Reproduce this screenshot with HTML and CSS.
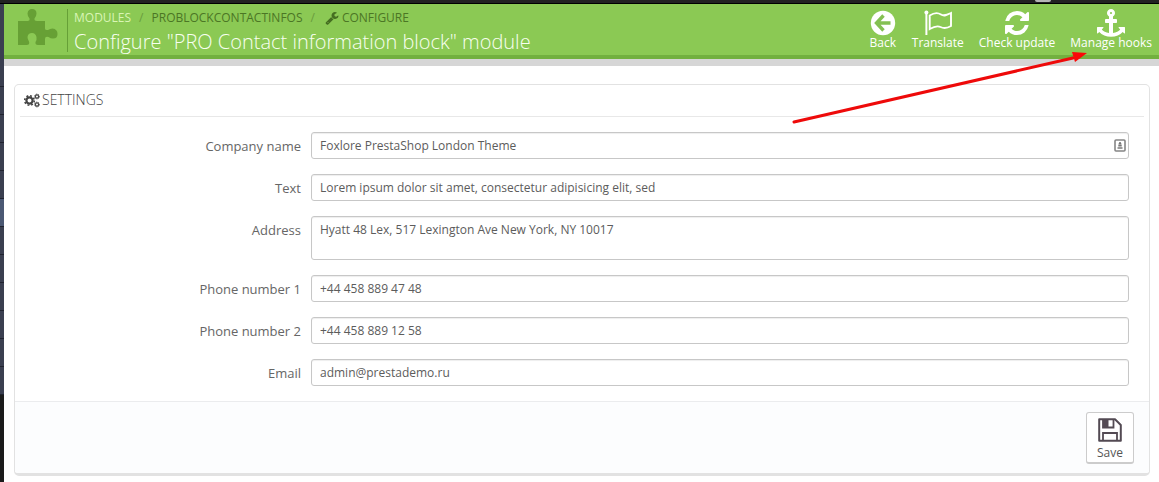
FILE: index.html
```
<!DOCTYPE html>
<html lang="en">
<head>
<meta charset="utf-8">
<title>Configure module</title>
<link rel="stylesheet" href="styles.css">
</head>
<body>
<div class="topbar"><span class="avatar"></span></div>
<div class="shell">
  <nav class="sidebar" aria-label="Main menu">
    <span class="nav-item nav-first"></span>
    <span class="nav-item"></span>
    <span class="nav-item"></span>
    <span class="nav-item"></span>
    <span class="nav-item"></span>
    <span class="nav-item nav-active"></span>
    <span class="nav-item"></span>
    <span class="nav-item"></span>
    <span class="nav-item"></span>
    <span class="nav-item"></span>
    <span class="nav-item"></span>
    <span class="nav-item"></span>
  </nav>
  <div class="content">
    <header class="page-head">
      <svg class="puzzle" viewBox="0 0 40 37" aria-hidden="true"><path d="M0 12H9.500Q12 12 11.500 9.500Q9.500 7.500 9.500 4.500Q10 0 14 0Q18.500 0 18.500 4.500Q18.500 7 16.500 9.500Q16 12 19 12H27V19.500Q27 21.500 30 21Q32 19.500 34.500 19.500Q39.500 20 39.500 25Q39.500 29.500 35 29.500Q32.500 29.500 30.500 28Q27 27 27 30V36H20Q17 36 17.500 33Q19 31 18.500 28Q17.500 24 14 24Q10 24 9.500 28Q9.500 30.500 11 32.500Q12 36 8.500 36H0Z"/></svg>
      <div class="head-text">
        <ol class="crumbs">
          <li><a class="crumb-root" href="#">MODULES</a></li>
          <li><a href="#">PROBLOCKCONTACTINFOS</a></li>
          <li><a href="#"><svg class="wrench" viewBox="0 0 1792 1792" aria-hidden="true"><path d="M448 1472q0-26-19-45t-45-19-45 19-19 45 19 45 45 19 45-19 19-45zm644-420l-682 682q-37 37-90 37-52 0-91-37l-106-108q-38-36-38-90 0-53 38-91l681-681q39 98 114.500 173.500t173.500 114.500zm634-435q0 39-23 106-47 134-164.500 217.500t-258.500 83.500q-185 0-316.500-131.500t-131.500-316.500 131.500-316.500 316.500-131.500q58 0 121.500 16.500t107.500 46.500q16 11 16 28t-16 28l-293 169v224l193 107q5-3 79-48.500t135.500-81 70.500-35.500q15 0 23.500 10t8.500 25z"/></svg>CONFIGURE</a></li>
        </ol>
        <h1 class="title">Configure "PRO Contact information block" module</h1>
      </div>
      <div class="tools">
        <a class="tool" href="#">
          <svg class="tool-icon" viewBox="0 0 28 28" aria-hidden="true"><circle cx="14" cy="14" r="12.200" fill="currentColor"/><path d="M14.500 6.500L7.500 14l7 7.500M8 14h13.500" fill="none" stroke="#84c052" stroke-width="3.400"/></svg>
          <span>Back</span>
        </a>
        <a class="tool" href="#">
          <svg class="tool-icon" viewBox="0 0 28 28" aria-hidden="true"><path d="M2.400 3v23" fill="none" stroke="currentColor" stroke-width="2"/><circle cx="2.400" cy="3.400" r="2" fill="currentColor"/><path d="M5.700 6.500C11 3 14 3.500 17 5.500S23 6 27 4V17C22 20 19.500 19.500 16.500 18S10 17.500 5.700 20Z" fill="none" stroke="currentColor" stroke-width="1.900"/></svg>
          <span>Translate</span>
        </a>
        <a class="tool" href="#">
          <svg class="tool-icon" viewBox="0 0 1792 1792" aria-hidden="true"><path fill="currentColor" d="M1639 1056q0 5-1 7-64 268-268 434.500t-478 166.500q-146 0-282.500-55t-243.500-157l-129 129q-19 19-45 19t-45-19-19-45v-448q0-26 19-45t45-19h448q26 0 45 19t19 45-19 45l-137 137q71 66 161 102t187 36q134 0 250-65t186-179q11-17 53-117 8-23 30-23h192q13 0 22.500 9.500t9.500 22.500zm25-800v448q0 26-19 45t-45 19h-448q-26 0-45-19t-19-45 19-45l138-138q-148-137-349-137-134 0-250 65t-186 179q-11 17-53 117-8 23-30 23h-199q-13 0-22.500-9.500t-9.500-22.500v-7q65-268 270-434.500t480-166.500q146 0 284 55.500t245 156.500l130-129q19-19 45-19t45 19 19 45z"/></svg>
          <span>Check update</span>
        </a>
        <a class="tool" href="#">
          <svg class="tool-icon" viewBox="0 0 1792 1792" aria-hidden="true"><path fill="currentColor" d="M960 256q0-26-19-45t-45-19-45 19-19 45 19 45 45 19 45-19 19-45zm832 928v352q0 22-20 30-8 2-12 2-13 0-23-9l-93-93q-119 143-318.500 226.500t-429.500 83.500-429.500-83.500-318.500-226.500l-93 93q-9 9-23 9-4 0-12-2-20-8-20-30v-352q0-14 9-23t23-9h352q22 0 30 20 8 19-7 35l-100 100q67 91 189.500 153.500t271.500 82.500v-647h-192q-26 0-45-19t-19-45v-128q0-26 19-45t45-19h192v-163q-58-34-93-92.500t-35-128.500q0-106 75-181t181-75 181 75 75 181q0 70-35 128.500t-93 92.500v163h192q26 0 45 19t19 45v128q0 26-19 45t-45 19h-192v647q149-20 271.500-82.500t189.500-153.500l-100-100q-15-16-7-35 8-20 30-20h352q14 0 23 9t9 23z"/></svg>
          <span>Manage hooks</span>
        </a>
      </div>
      <svg class="pointer" viewBox="0 0 300 76" aria-hidden="true"><path d="M3 72L282 8" fill="none" stroke="#ee0a0a" stroke-width="3" stroke-linecap="round"/><path d="M296 3L281 2L284 12Z" fill="#fa0808"/></svg>
    </header>
    <main class="main">
      <form class="panel">
        <h2 class="panel-head">
          <svg class="cogs" viewBox="0 0 16 15" aria-hidden="true"><g fill="none" stroke="currentColor"><circle cx="5.500" cy="7.500" r="3.100" stroke-width="2.200"/><circle cx="5.500" cy="7.500" r="4.800" stroke-width="1.600" stroke-dasharray="1.900 1.870"/><circle cx="13" cy="3.500" r="1.600" stroke-width="1.200"/><circle cx="13" cy="3.500" r="2.400" stroke-width="1" stroke-dasharray="1 .885"/><circle cx="13" cy="11.500" r="1.600" stroke-width="1.200"/><circle cx="13" cy="11.500" r="2.400" stroke-width="1" stroke-dasharray="1 .885"/></g></svg>SETTINGS
        </h2>
        <div class="fields">
          <label class="label" for="company">Company name</label>
          <div class="control">
            <input class="input" id="company" type="text" value="Foxlore PrestaShop London Theme">
            <svg class="autofill" viewBox="0 0 12 13" aria-hidden="true"><rect x="1" y="1" width="10" height="11" rx="1" fill="#fff" stroke="#858585" stroke-width="1.600"/><circle cx="6" cy="4.300" r="1.200" fill="#777"/><path d="M4.300 5.500h3.400v2H4.300z" fill="#777"/><path d="M3.500 9h5" stroke="#777" stroke-width="1.400"/></svg>
          </div>
          <label class="label" for="text">Text</label>
          <input class="input" id="text" type="text" value="Lorem ipsum dolor sit amet, consectetur adipisicing elit, sed">
          <label class="label" for="address">Address</label>
          <textarea class="input area" id="address">Hyatt 48 Lex, 517 Lexington Ave New York, NY 10017</textarea>
          <label class="label" for="phone1">Phone number 1</label>
          <input class="input" id="phone1" type="text" value="+44 458 889 47 48">
          <label class="label" for="phone2">Phone number 2</label>
          <input class="input" id="phone2" type="text" value="+44 458 889 12 58">
          <label class="label" for="email">Email</label>
          <input class="input" id="email" type="text" value="admin@prestademo.ru">
        </div>
        <div class="panel-foot">
          <button class="save" type="button">
            <svg class="disk" viewBox="0 0 24 24" aria-hidden="true"><path d="M1.200 1.200H17L22.800 7V22.800H1.200Z" fill="none" stroke="currentColor" stroke-width="2" stroke-linejoin="round"/><path d="M5 1.500V9.500H15.500V1.500M5 22.500V15H19V22.500" fill="none" stroke="currentColor" stroke-width="1.800"/><path d="M5 1.500h5.500v8H5z" fill="currentColor"/></svg>
            <span>Save</span>
          </button>
        </div>
      </form>
    </main>
  </div>
</div>
</body>
</html>
```
FILE: styles.css
```
* { box-sizing: border-box; }
body {
  margin: 0;
  min-height: 100vh;
  display: flex;
  flex-direction: column;
  background: #fff;
  color: #666;
  font: 12px/16px "Open Sans", "Noto Sans", sans-serif;
}
a { color: inherit; text-decoration: none; }
.topbar {
  height: 4px;
  background: #222;
  border-bottom: 1px solid #000;
  display: flex;
  justify-content: flex-end;
  padding-right: 108px;
  overflow: hidden;
}
.avatar { width: 16px; height: 2px; background: #b5b5b5; border-radius: 0 0 8px 8px; }
.shell { flex: 1; display: flex; }
.sidebar { width: 4px; background: #1b1b1b; flex: none; }
.nav-item { display: block; height: 28px; background: #3a3f50; border-bottom: 1px solid #20232f; }
.nav-first { height: 83px; }
.nav-active { background: #4b5873; }
.content { flex: 1; min-width: 0; }
.page-head {
  position: relative;
  display: flex;
  height: 62px;
  padding: 5px 7px 0 14px;
  background: #8bc954;
  border-bottom: 7px solid #d6d6d6;
  box-shadow: inset 0 -4px #72b03f;
}
.puzzle { width: 40px; height: 37px; fill: #67a035; flex: none; }
.head-text { height: 43px; margin-left: 9px; padding-left: 6px; border-left: 1px solid #66a037; }
.crumbs { display: flex; margin: 0; padding: 1px 0 0; list-style: none; color: #4b7625; }
.crumbs li + li::before { content: "/"; padding: 0 8px; color: #6a9c3d; }
.crumb-root { color: #d9f5b5; }
.wrench { width: 14px; height: 14px; margin: 0 3px 0 2px; vertical-align: -3px; fill: #456e21; }
.title { margin: 3px 0 0; color: #f8fff0; font-size: 20px; line-height: 26px; font-weight: 300; white-space: nowrap; }
.tools { display: flex; gap: 15px; margin-left: auto; color: #fff; }
.tool { display: flex; flex-direction: column; align-items: center; white-space: nowrap; }
.tool-icon { width: 28px; height: 28px; margin-bottom: -2px; }
.pointer { position: absolute; width: 300px; height: 76px; right: 68px; top: 46px; pointer-events: none; }
.main { padding: 18px 9px 6px 10px; }
.panel {
  border: 1px solid #e2e2e2;
  border-bottom: 3px solid #e2e2e2;
  border-radius: 5px;
  overflow: hidden;
}
.panel-head {
  display: flex;
  align-items: center;
  gap: 2px;
  height: 32px;
  margin: 0 5px;
  padding: 0 0 1px 4px;
  border-bottom: 1px solid #e8e8e8;
  color: #444;
  font-size: 14px;
  font-weight: 300;
}
.cogs { width: 16px; height: 15px; color: #444; }
.fields {
  display: grid;
  grid-template-columns: minmax(0, 286fr) minmax(0, 818fr);
  gap: 15px 10px;
  padding: 15px 20px 15px 0;
}
.label { text-align: right; font-size: 13px; line-height: 28px; height: 27px; }
.control { position: relative; }
.input {
  display: block;
  width: 100%;
  height: 27px;
  padding: 0 8px;
  border: 1px solid #c7c7c7;
  border-radius: 3px;
  background: #fff;
  box-shadow: inset 0 1px 1px #eee;
  color: #5c5c5c;
  font: inherit;
}
.area { height: 44px; padding-top: 5px; resize: none; }
.autofill { position: absolute; right: 3px; top: 7px; width: 12px; height: 13px; }
.panel-foot {
  display: flex;
  justify-content: flex-end;
  padding: 10px 15px 9px;
  border-top: 1px solid #ebecee;
  background: #fcfdfe;
}
.save {
  display: flex;
  flex-direction: column;
  align-items: center;
  width: 48px;
  height: 52px;
  padding: 5px 0 0;
  border: 1px solid #ccc;
  border-bottom-width: 2px;
  border-radius: 3px;
  background: #fff;
  color: #555;
  font: inherit;
}
.disk { width: 24px; height: 24px; margin-bottom: 3px; color: #534a53; }
```
